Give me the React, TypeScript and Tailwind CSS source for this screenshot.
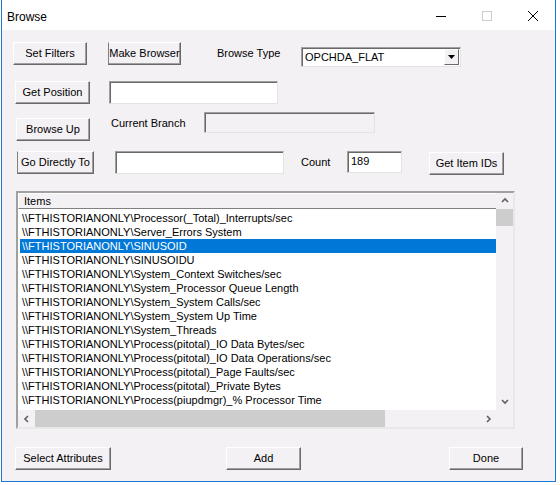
import React from 'react';

const items = [
  '\\\\FTHISTORIANONLY\\Processor(_Total)_Interrupts/sec',
  '\\\\FTHISTORIANONLY\\Server_Errors System',
  '\\\\FTHISTORIANONLY\\SINUSOID',
  '\\\\FTHISTORIANONLY\\SINUSOIDU',
  '\\\\FTHISTORIANONLY\\System_Context Switches/sec',
  '\\\\FTHISTORIANONLY\\System_Processor Queue Length',
  '\\\\FTHISTORIANONLY\\System_System Calls/sec',
  '\\\\FTHISTORIANONLY\\System_System Up Time',
  '\\\\FTHISTORIANONLY\\System_Threads',
  '\\\\FTHISTORIANONLY\\Process(pitotal)_IO Data Bytes/sec',
  '\\\\FTHISTORIANONLY\\Process(pitotal)_IO Data Operations/sec',
  '\\\\FTHISTORIANONLY\\Process(pitotal)_Page Faults/sec',
  '\\\\FTHISTORIANONLY\\Process(pitotal)_Private Bytes',
  '\\\\FTHISTORIANONLY\\Process(piupdmgr)_% Processor Time',
  '\\\\FTHISTORIANONLY\\Process(piupdmgr)_IO Data Bytes/sec',
];

const SELECTED = 2;

function Btn({ label, className = '', dark = false }: { label: string; className?: string; dark?: boolean }) {
  return (
    <button
      className={`h-[23px] shrink-0 flex items-center justify-center border border-t-white border-r-[#696969] border-b-[#696969] shadow-[inset_-1px_-1px_0_#a0a0a0] bg-[#f4f1f4] text-[11px] leading-none text-black ${
        dark ? 'border-l-[#808080]' : 'border-l-white'
      } ${className}`}
    >
      {label}
    </button>
  );
}

function Edit({ value = '', className = '', disabled = false }: { value?: string; className?: string; disabled?: boolean }) {
  return (
    <div
      className={`shrink-0 border border-t-[#a0a0a0] border-l-[#a0a0a0] border-r-[#e3e3e3] border-b-[#e3e3e3] shadow-[inset_1px_1px_0_#696969] pl-[3px] pt-[2px] text-[11px] leading-[14px] text-black ${
        disabled ? 'bg-[#f4f1f4]' : 'bg-white'
      } ${className}`}
    >
      {value}
    </div>
  );
}

function Chevron({ dir }: { dir: 'up' | 'down' | 'left' | 'right' }) {
  const d = {
    up: 'M1 5 L4 2 L7 5',
    down: 'M1 2 L4 5 L7 2',
    left: 'M5 1 L2 4 L5 7',
    right: 'M3 1 L6 4 L3 7',
  }[dir];
  return (
    <svg width="8" height="8" viewBox="0 0 8 8">
      <path d={d} fill="none" stroke="#606060" strokeWidth="1.6" />
    </svg>
  );
}

export default function App() {
  return (
    <div className="w-[560px] h-[485px] bg-white" style={{ fontFamily: '"Liberation Sans", Arial, sans-serif' }}>
      <div className="ml-px w-[555px] h-[482px] border-x border-b border-[#1979d6] bg-[#f4f1f4] flex flex-col">
        {/* caption */}
        <div className="h-[30px] bg-white flex items-start shrink-0">
          <span className="ml-[5px] mt-[10px] text-[12px] leading-[14px] text-black">Browse</span>
          <div className="ml-auto flex h-[30px]">
            <div className="w-[46px] flex items-center justify-center">
              <div className="w-[10px] h-px bg-black mt-[2px]" />
            </div>
            <div className="w-[46px] flex items-center justify-center">
              <div className="w-[10px] h-[10px] border border-[#cccccc] mt-[2px]" />
            </div>
            <div className="w-[45px] flex items-center justify-center">
              <svg width="10" height="10" viewBox="0 0 10 10" className="mt-[2px]">
                <path d="M0 0 L10 10 M10 0 L0 10" stroke="#000" strokeWidth="1" />
              </svg>
            </div>
          </div>
        </div>

        {/* row: filters / browse type */}
        <div className="mt-[12px] h-[25px] flex items-start">
          <Btn label="Set Filters" className="ml-[11px] w-[74px]" />
          <Btn label="Make Browser" className="ml-[21px] w-[73px]" dark />
          <div className="ml-[36px] w-[84px] h-[23px] flex items-center text-[11px] text-black">Browse Type</div>
          <div className="mt-[5px] w-[160px] h-[20px] border border-t-[#a0a0a0] border-l-[#a0a0a0] border-r-[#e3e3e3] border-b-[#e3e3e3] shadow-[inset_1px_1px_0_#696969] bg-white flex items-center">
            <span className="pl-[3px] text-[11px] leading-none text-black flex-1">OPCHDA_FLAT</span>
            <div className="w-[15px] h-[16px] mr-px border border-t-white border-l-white border-r-[#696969] border-b-[#696969] bg-[#f4f1f4] flex items-center justify-center">
              <svg width="7" height="4" viewBox="0 0 7 4">
                <path d="M0 0 H7 L3.5 4 Z" fill="#000" />
              </svg>
            </div>
          </div>
        </div>

        {/* row: position */}
        <div className="mt-[14px] h-[23px] flex items-start">
          <Btn label="Get Position" className="ml-[13px] w-[75px]" />
          <Edit className="ml-[19px] w-[169px] h-[23px]" />
        </div>

        {/* row: browse up / current branch */}
        <div className="mt-[8px] h-[29px] flex items-start">
          <Btn label="Browse Up" className="ml-[14px] mt-[6px] w-[74px]" />
          <div className="ml-[21px] w-[93px] h-[22px] flex items-center text-[11px] text-black">Current Branch</div>
          <Edit className="w-[171px] h-[21px]" disabled />
        </div>

        {/* row: go to / count */}
        <div className="mt-[10px] h-[23px] flex items-start">
          <Btn label="Go Directly To" className="ml-[15px] w-[77px]" dark />
          <Edit className="ml-[21px] w-[169px] h-[23px]" />
          <div className="ml-[17px] w-[46px] h-[22px] flex items-center text-[11px] text-black">Count</div>
          <Edit value="189" className="w-[55px] h-[22px]" />
          <Btn label="Get Item IDs" className="ml-[27px] mt-px w-[75px]" />
        </div>

        {/* item list */}
        <div className="mt-[17px] ml-[14px] w-[499px] h-[238px] border-2 border-t-[#a0a0a0] border-l-[#a0a0a0] border-r-[#e8e8e8] border-b-[#e8e8e8] flex flex-col">
          <div className="flex h-[217px]">
            <div className="w-[478px] flex flex-col">
              <div className="h-[16px] border-t border-l border-t-white border-l-white border-b border-b-[#808080] flex items-center pl-[5px] text-[11px] text-black bg-[#f4f1f4]">
                Items
              </div>
              <div className="flex-1 bg-white overflow-hidden pt-[2px]">
                {items.map((it, i) => (
                  <div
                    key={i}
                    className={`ml-[2px] pl-[2px] h-[14px] leading-[14px] text-[11px] whitespace-nowrap ${
                      i === SELECTED ? 'bg-[#0078d7] text-white' : 'text-black'
                    }`}
                  >
                    {it}
                  </div>
                ))}
              </div>
            </div>
            <div className="w-[17px] flex flex-col items-stretch bg-[#f4f1f4]">
              <div className="h-[16px] flex items-center justify-center">
                <Chevron dir="up" />
              </div>
              <div className="h-[17px] bg-[#cdcdcd]" />
              <div className="flex-1" />
              <div className="h-[17px] flex items-center justify-center">
                <Chevron dir="down" />
              </div>
            </div>
          </div>
          <div className="flex h-[17px]">
            <div className="w-[478px] flex items-stretch bg-[#f4f1f4]">
              <div className="w-[17px] flex items-center justify-center">
                <Chevron dir="left" />
              </div>
              <div className="w-[350px] bg-[#cdcdcd]" />
              <div className="flex-1" />
              <div className="w-[17px] flex items-center justify-center">
                <Chevron dir="right" />
              </div>
            </div>
            <div className="w-[17px] bg-[#f4f1f4]" />
          </div>
        </div>

        {/* bottom buttons */}
        <div className="mt-[18px] h-[23px] flex items-start">
          <Btn label="Select Attributes" className="ml-[13px] w-[96px]" />
          <Btn label="Add" className="ml-[115px] w-[75px]" />
          <Btn label="Done" className="ml-[148px] w-[74px]" />
        </div>
      </div>
    </div>
  );
}
